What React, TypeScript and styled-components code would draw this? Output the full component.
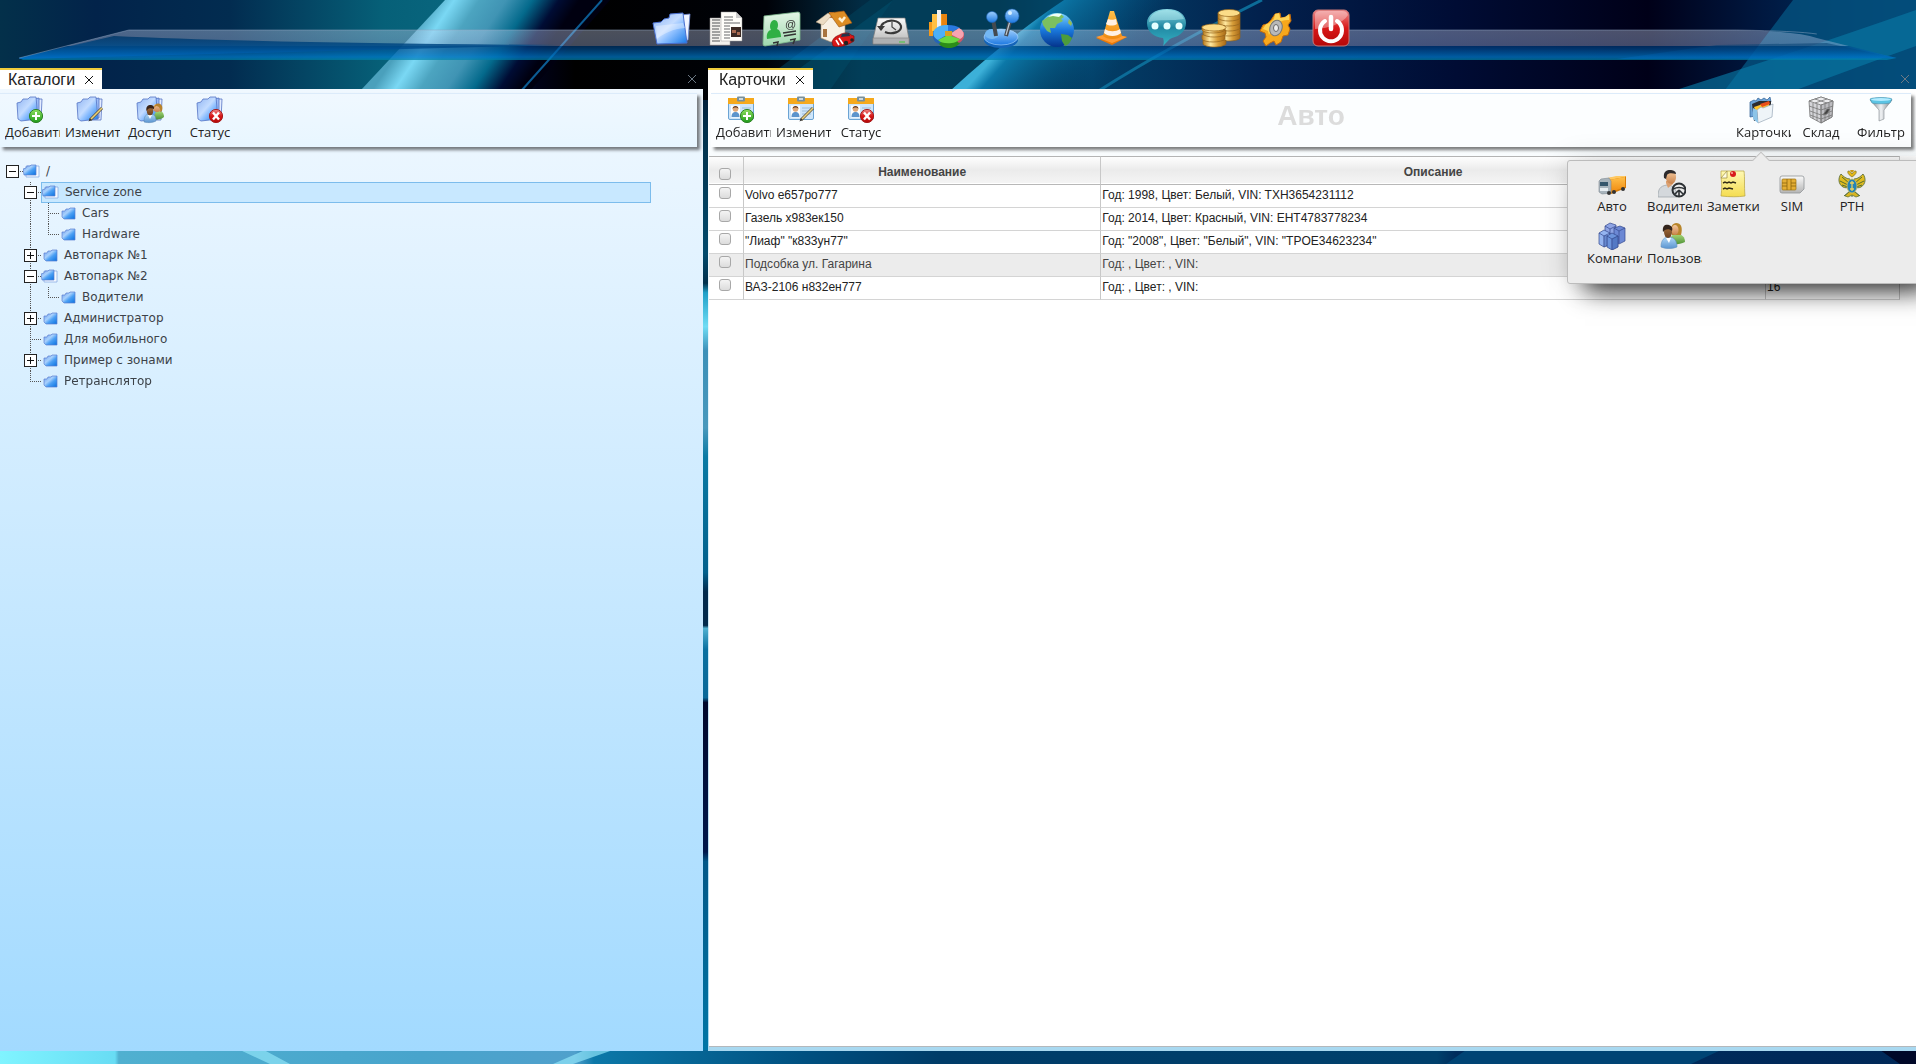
import React, { useState } from 'react';
import styled, { createGlobalStyle, css } from 'styled-components';

const GlobalStyle = createGlobalStyle`
  *, *::before, *::after { box-sizing: border-box; }
  html, body { height: 100%; margin: 0; overflow: hidden; }
  body { font-family: "Liberation Sans", Arial, sans-serif; font-size: 12px; color: #222; background: #000418; }
  #root { height: 100%; }
  button { font: inherit; color: inherit; background: none; border: 0; padding: 0; cursor: pointer; }
`;

/* ---------- drawings ---------- */

const Defs = styled.svg`
  position: absolute;
  width: 0;
  height: 0;
`;

const Grad = ({ id, stops, h }: { id: string; stops: string[]; h?: boolean }) => (
  <linearGradient id={id} x1="0" y1="0" x2={h ? '1' : '0'} y2={h ? '0' : '1'}>
    {stops.map((c, i) => (
      <stop key={i} offset={i / (stops.length - 1)} stopColor={c} />
    ))}
  </linearGradient>
);

const SharedDefs = () => (
  <Defs aria-hidden="true">
    <defs>
      <linearGradient id="folder" x1="0" y1="0" x2="1" y2="1">
        <stop offset="0" stopColor="#8fb4f2" />
        <stop offset=".45" stopColor="#c4dcff" />
        <stop offset=".6" stopColor="#8fc0ff" />
        <stop offset="1" stopColor="#1478e8" />
      </linearGradient>
      <linearGradient id="leaf" x1="0" y1="0" x2="1" y2="1">
        <stop offset="0" stopColor="#6c9cec" />
        <stop offset=".4" stopColor="#a8d0fc" />
        <stop offset=".6" stopColor="#4ca0f4" />
        <stop offset="1" stopColor="#0870e0" />
      </linearGradient>
      <Grad id="gold" stops={['#b87a1c', '#ffe9a0', '#d69c38', '#a86a18']} h />
      <Grad id="orange" stops={['#ffc04a', '#f08a10']} />
      <Grad id="green" stops={['#8fe060', '#1f9a1a']} />
      <Grad id="red" stops={['#f08a8a', '#d81818', '#b40808']} />
      <Grad id="silver" stops={['#fafafa', '#b4b4b4']} />
      <Grad id="teal" stops={['#8fe0ea', '#1f8aa4', '#35b8c8']} />
      <Grad id="blue" stops={['#9fd0ff', '#1c78e0']} />
      <Grad id="card" stops={['#e4f6e6', '#9fd8ae']} />
      <Grad id="steel" stops={['#707880', '#f0f2f4', '#70787f']} h />
      <Grad id="ocean" stops={['#7cd4ff', '#1a78dc', '#04348c']} />
      <Grad id="note" stops={['#fff9b4', '#f4dc50']} />
      <Grad id="skin" stops={['#f4c89c', '#c8824c']} />
      <Grad id="dark" stops={['#a8703c', '#6a4020']} />
      <Grad id="blueShirt" stops={['#b0d8f8', '#5a94d0']} />
      <Grad id="greenShirt" stops={['#a8d878', '#4f9238']} />
    </defs>
  </Defs>
);

const AddMark = () => (
  <g>
    <circle cx="20" cy="20" r="6.6" fill="url(#green)" stroke="#2e8426" />
    <path d="M20 16v8M16 20h8" stroke="#fff" strokeWidth="2" />
  </g>
);
const StopMark = () => (
  <g>
    <circle cx="20" cy="20" r="6.6" fill="url(#red)" stroke="#a81c1c" />
    <path d="M17 16.5l6 7M23 16.5l-6 7" stroke="#fff" strokeWidth="2.4" />
  </g>
);
const PenMark = () => (
  <g>
    <path d="M14 24L26 12" stroke="#5c5440" strokeWidth="3" />
    <path d="M15 23L26 12" stroke="#ecd27a" strokeWidth="1.6" />
    <path d="M12.5 25.5l1.3-3 1.8 1.6z" fill="#333" />
  </g>
);
const UsersMark = () => (
  <g>
    <path d="M18 23c0-6 2-8 5-8s5 2 5 6c-2 2-6 3-10 2z" fill="url(#greenShirt)" />
    <circle cx="21" cy="12" r="4" fill="url(#skin)" />
    <path d="M18 12c0-5 6-6 8-2 1 3 0 6-2 6 1-3-1-6-4-6z" fill="#b8822c" />
    <path d="M8 26c0-6 2-8 6-8s6 2 6 7c-3 2-9 2-12 1z" fill="url(#blueShirt)" stroke="#5a84b0" strokeWidth=".5" />
    <path d="M12 19l2 4 2-4z" fill="#fff" />
    <ellipse cx="14" cy="15" rx="3.2" ry="4.2" fill="url(#dark)" />
    <path d="M10.500 15c-1-5 2-6 4-6s4 1 3.500 4c-2-1-5-1-6 0z" fill="#3a2418" />
  </g>
);
const FolderStack = () => (
  <g stroke="#5674c4" strokeWidth=".8" strokeLinejoin="round">
    <path d="M14 3l8 0 4 0-1 21H14z" fill="#e4ecff" />
    <path d="M18 3l5-1v20h-5z" fill="#9cbcf6" />
    <path d="M1 7l4-1 2-3 5 0 2-2 6 0 2 22-17 2-3-2z" fill="url(#folder)" />
  </g>
);
const Badge = () => (
  <g>
    <rect x="1.5" y="2.5" width="25" height="21" rx="1.5" fill="#cfe6fa" stroke="#6ba4d4" />
    <path d="M1 2h26v6H1z" fill="#f5a91c" />
    <rect x="10" y=".5" width="8" height="5" rx="1" fill="#78909c" />
    <rect x="12" y="2" width="4" height="2" fill="#cfd8dc" />
    <rect x="4" y="9.5" width="9" height="12" fill="#fff" />
    <path d="M4.500 21c0-4 2-5 4-5s4 1 4 5z" fill="#5c94cc" />
    <circle cx="8.5" cy="13" r="2.8" fill="#e0a878" />
    <path d="M5.500 13c0-4 6-4 6 0-1-2-5-2-6 0z" fill="#6a3a18" />
    <path d="M15 12h9M15 15h9M15 18h9" stroke="#90b4d0" strokeWidth=".8" />
  </g>
);

const small: Record<string, React.ReactNode> = {
  folderAdd: <><FolderStack /><AddMark /></>,
  folderEdit: <><FolderStack /><PenMark /></>,
  folderUsers: <><FolderStack /><UsersMark /></>,
  folderStop: <><FolderStack /><StopMark /></>,
  cardAdd: <><Badge /><AddMark /></>,
  cardEdit: <><Badge /><PenMark /></>,
  cardStop: <><Badge /><StopMark /></>,
  cards: (
    <g strokeLinejoin="round">
      <path d="M3 6l4-2 2 1 2-3 3 2 3-2 3 2 3-3 1 5L9 20 3 21z" fill="#6ca4d8" stroke="#2c5c90" strokeWidth=".7" />
      <path d="M5 8l7-3 12 0v13L7 25z" fill="#2c2c30" />
      <path d="M7 11l15-5v5L9 16z" fill="#ffc42c" />
      <path d="M13 8l9-3 1 3-8 3z" fill="#e8501c" />
      <path d="M10 14l4-3 2 1 10-4-1 13-14 6z" fill="#eef4f8" stroke="#98a8b8" strokeWidth=".7" />
      <path d="M6 12l4 2 1 13-5-4z" fill="#8cc4e8" />
    </g>
  ),
  store: (
    <g stroke="#777" strokeWidth=".8">
      <path d="M14 1l12 4-1 16-11 6L3 21 2 5z" fill="#d4d4d8" />
      <path d="M2 5l12 4 12-4-12-4z" fill="#ececee" />
      <path d="M14 9l12-4-1 16-11 6z" fill="#bcbcc0" />
      <path d="M14 9v18M6 7v16M10 8v17M18 8v17M22 7v16M2 10l12 4 12-4M3 15l11 4 11-4M3 19l11 4 11-4M8 3l12 4M20 3L8 7" fill="none" />
      <path d="M16 19l4-6 3 0-3 5z" fill="#444" />
    </g>
  ),
  filter: (
    <g>
      <path d="M3 4h22l-8 10v9l-5 2V14z" fill="url(#steel)" stroke="#858b90" strokeWidth=".6" />
      <path d="M3 3c3-2 19-2 22 0l-2 4c-4 1-14 1-18 0z" fill="#5cc4e4" stroke="#4a94b0" strokeWidth=".6" />
      <ellipse cx="14" cy="3.5" rx="10" ry="1.5" fill="#b4ecff" />
    </g>
  ),
  truck: (
    <g>
      <path d="M10 8l18-2v12l-15 6z" fill="#d87c08" />
      <path d="M10 8l8-2 10 0-1 1-16 3z" fill="#ffc860" />
      <path d="M11 10l16-3v10l-14 5z" fill="url(#orange)" />
      <path d="M1 11l2-2 8-1 2 3v12l-9 1-3-2z" fill="#a8b4bc" stroke="#7c8890" strokeWidth=".6" />
      <path d="M2 12h8v4H2z" fill="#35566c" />
      <path d="M2 18h8v3H2z" fill="#e8eef2" />
      <circle cx="11" cy="23" r="2" fill="#333" /><circle cx="16" cy="22" r="2" fill="#333" /><circle cx="25" cy="19" r="2" fill="#333" />
    </g>
  ),
  driver: (
    <g>
      <path d="M0 27c0-8 2-11 9-12 6 0 10 4 10 12z" fill="#d4d8dc" stroke="#9aa0a6" strokeWidth=".7" />
      <path d="M8 13l2 5 5-4v-3H8z" fill="#dca070" />
      <path d="M7 4c0-3 8-4 10-1 2 3 1 10-3 11-4 0-7-4-7-10z" fill="url(#skin)" />
      <path d="M6 8C5 1 9 0 12 0s6 1 6 4c-4-1-8-1-9 1l-1 4z" fill="#2c2a2c" />
      <circle cx="21" cy="20" r="6.5" fill="none" stroke="#2c3034" strokeWidth="2" />
      <path d="M15 19c4-2 8-2 12 0M21 20v6M21 20l-4 4M21 20l4 4" stroke="#2c3034" strokeWidth="1.6" fill="none" />
    </g>
  ),
  note: (
    <g>
      <path d="M3 1h23c1 7 0 14 1 25-7 1-15 1-24 0 1-8 1-12 0-18z" fill="url(#note)" stroke="#b8a43c" strokeWidth=".7" />
      <path d="M3 8l6 0V1z" fill="#fffce0" stroke="#98883c" strokeWidth=".7" />
      <circle cx="15" cy="4" r="3" fill="#d81c1c" /><circle cx="14" cy="3" r="1" fill="#ffb0a0" />
      <path d="M5 13l2-1 2 1 2-1 2 1 2-1 3 1M5 19l2-1 2 1 2-1 4 1" stroke="#332e18" strokeWidth="1.4" fill="none" />
    </g>
  ),
  sim: (
    <g>
      <path d="M4 6h20a2 2 0 012 2v11l-4 4H4a2 2 0 01-2-2V8a2 2 0 012-2z" fill="url(#silver)" stroke="#909498" strokeWidth=".8" />
      <rect x="4" y="9" width="14" height="11" rx="1" fill="#e4ae34" stroke="#9c7414" strokeWidth=".7" />
      <path d="M9 9v11M13 9v11M4 13h5M4 16h5M13 13h5M13 16h5" stroke="#8c640c" strokeWidth=".8" />
    </g>
  ),
  eagle: (
    <g>
      <path d="M14 7C11 5 9 3 10 1c2 0 3 1 4 3 1-2 2-3 4-3 1 2-1 4-4 6z" fill="#e4b818" stroke="#6e6418" strokeWidth=".6" />
      <path d="M12 9C8 9 5 6 3 4 0 8 0 14 5 17c2 1 4 1 6 0zM16 9c4 0 7-3 9-5 3 4 3 10-2 13-2 1-4 1-6 0z" fill="#e0bc20" stroke="#4c6434" strokeWidth=".8" />
      <path d="M4 7l7 6M2 11l8 4M4 15l6 2M24 7l-7 6M26 11l-8 4M24 15l-6 2M12 21l-6 5M16 21l6 5M14 23v4" stroke="#566c30" strokeWidth="1" />
      <path d="M11 22l-4 4 3 1 4-2 4 2 3-1-4-4z" fill="#d8b420" stroke="#566c30" strokeWidth=".7" />
      <ellipse cx="14" cy="16" rx="5" ry="7" fill="#2484b8" stroke="#d8c060" strokeWidth=".8" />
      <path d="M14 11v10M12 13h4M12 19h4" stroke="#e8d060" strokeWidth="1.3" />
      <path d="M12 0h4l-1 2h-2z" fill="#c89818" />
    </g>
  ),
  company: (
    <g stroke="#34488c" strokeWidth=".7" strokeLinejoin="round">
      <path d="M7 4l5-3 6 2v14l-6 2-5-3z" fill="#8ea4e4" />
      <path d="M16 6l6-2 5 2v13l-6 3-5-3z" fill="#6c88d4" />
      <path d="M1 11l5-3 6 3v11l-6 3-5-3z" fill="#94b4f0" />
      <path d="M9 14l5-3 6 3v11l-6 3-5-3z" fill="#6c94dc" />
      <path d="M1 11l5 3 6-3M6 14v11M9 14l5 3 6-3M14 17v11M16 6l5 3 6-3M21 9v12M7 4l5 3 6-3M12 7v5" fill="none" />
      <path d="M6 14l3-1v11l-3 1zM14 17l6-3v11l-6 3z" fill="#3c60b0" opacity=".5" />
    </g>
  ),
  users: (
    <g>
      <path d="M12 22c0-8 2-10 7-10s8 3 8 8c-4 2-10 3-15 2z" fill="url(#greenShirt)" />
      <path d="M14 13c-2-7-1-11 4-12 5 0 7 4 5 12z" fill="#b8862c" />
      <ellipse cx="17" cy="8" rx="3.5" ry="5" fill="url(#skin)" />
      <path d="M3 25c0-7 3-10 8-10s8 4 8 10c-5 2-11 2-16 0z" fill="url(#blueShirt)" stroke="#6090c0" strokeWidth=".6" />
      <path d="M8 16l3 5 2-5z" fill="#fff" />
      <ellipse cx="10" cy="10" rx="4" ry="6" fill="url(#dark)" />
      <path d="M5 10C4 3 8 2 11 3s4 3 3 6c-2-2-5-2-7-1z" fill="#33241c" />
    </g>
  ),
};

const large: { name: string; art: React.ReactNode }[] = [
  { name: 'Каталоги', art: (
    <g strokeLinejoin="round">
      <path d="M30 6l9-1-2 26-7 1z" fill="#f0f4ff" stroke="#6c88d0" strokeWidth=".8" />
      <path d="M2 14l8-1 3-3 5-1 1-4 13-1 1 8 3 22-30 1z" fill="url(#folder)" stroke="#4a70d0" strokeWidth="1" />
      <path d="M5 17l27-3 2 5C22 20 13 24 6 30z" fill="#fff" opacity=".35" />
    </g>) },
  { name: 'Отчёты', art: (
    <g>
      <path d="M4 9h20v27H4z" fill="#f2f0ec" stroke="#999" strokeWidth=".5" />
      <path d="M6 11h8M6 14h8M6 17h8M6 20h7M6 23h8M6 26h8M6 29h7M6 32h8" stroke="#888" strokeWidth="1.3" />
      <path d="M15 3h15l6 6v23H15z" fill="#fffefa" stroke="#999" strokeWidth=".5" />
      <path d="M30 3l6 6h-6z" fill="#ccc" />
      <path d="M18 8h9M18 11h9M18 14h16M18 17h6M18 20h6M18 23h6M18 26h6M18 29h6" stroke="#9a9a9a" strokeWidth="1.3" />
      <rect x="25" y="18" width="10" height="10" fill="#3c2a24" /><path d="M26 21h4v3h-4zM31 23h3v3h-3z" fill="#a86a50" />
    </g>) },
  { name: 'Контакты', art: (
    <g>
      <path d="M3 7L37 3q2 0 2 2v26L4 37q-2 0-2-2z" fill="url(#card)" stroke="#7cb88c" strokeWidth=".8" />
      <path d="M6 30c-1-6 2-9 4-9-2-3-1-9 3-10 4 0 5 5 3 9 3 1 4 4 4 8z" fill="#30b044" />
      <text x="24" y="19" fontSize="11" fontFamily="Liberation Sans, sans-serif" fill="#333">@</text>
      <path d="M22 24l13-2M23 27l12-2M12 34l5-1-1 4M29 31l5-1-2 5" stroke="#333" strokeWidth="1.5" fill="none" />
    </g>) },
  { name: 'Объекты', art: (
    <g>
      <path d="M5 14l9-7 15 5v20l-14 1-10-4z" fill="#f8f0e4" stroke="#a89070" strokeWidth=".6" />
      <path d="M13 3h5v6h-5z" fill="#c87c3c" />
      <path d="M0 13L12 4l4 2-9 10z" fill="#ecdcc4" stroke="#b09878" strokeWidth=".5" />
      <path d="M13 4l15-2 8 12-13 4z" fill="#dc8c24" stroke="#985414" strokeWidth=".6" />
      <path d="M23 9l3 3 3-4" stroke="#fff0d0" strokeWidth="2.5" fill="none" />
      <path d="M7 20h4v8H7z" fill="#a87440" />
      <path d="M16 33c2-6 6-6 9-8 5-2 9-1 10 1l3 1v5c-6 4-14 7-21 5z" fill="#d81818" stroke="#780808" strokeWidth=".6" />
      <path d="M26 25l7-1 1 3-9 1z" fill="#24344c" />
      <path d="M20 31l3 5M23 29l4 6" stroke="#fff" strokeWidth="1.6" />
      <circle cx="30" cy="34" r="2.2" fill="#222" /><circle cx="36" cy="31" r="1.8" fill="#222" />
    </g>) },
  { name: 'История', art: (
    <g>
      <path d="M7 9h27l4 21v5H2v-5z" fill="url(#silver)" stroke="#777" strokeWidth=".7" />
      <path d="M2 29h36v6H2z" fill="#aeb0b2" stroke="#808080" strokeWidth=".6" />
      <path d="M28 33h6" stroke="#66c060" strokeWidth="1.5" />
      <path d="M13 14c5-4 15-3 17 3 1 6-9 9-16 6M13 14c-2 1-3 3-3 5" stroke="#383838" strokeWidth="2.2" fill="none" />
      <path d="M6 17h8l-4 5z" fill="#383838" /><path d="M21 13v5l4 3" stroke="#444" strokeWidth="1.2" fill="none" />
    </g>) },
  { name: 'Статистика', art: (
    <g>
      <path d="M3 13h4v14H3zM13 5h5v15h-5z" fill="#f49a1c" /><path d="M6 5h5v17H6z" fill="#ffc044" /><path d="M11 1h4v18h-4z" fill="#f0f0f0" /><path d="M16 5h5v14h-5z" fill="#e88410" />
      <path d="M12 28v6c3 4 7 5 11 5s9-2 11-5v-6z" fill="#2c8c18" />
      <path d="M7 24v5c1 3 3 5 6 6l9-10z" fill="#2464b8" /><path d="M38 23v5c-1 3-3 5-5 6l-8-8z" fill="#c85868" />
      <path d="M22 25L12 31c-5-2-6-8-3-11 4-4 9-4 13-4z" fill="#4cb0f8" />
      <path d="M22 24V16c5 0 9 1 12 3z" fill="#2a78e0" />
      <path d="M24 25l9-6c6 3 6 9 1 11z" fill="#f8a4b0" />
      <path d="M22 26l12 4c-3 5-18 6-22 1z" fill="#6cd840" />
      <path d="M19 22h7v5h-7z" fill="#d8a020" />
    </g>) },
  { name: 'Управление', art: (
    <g>
      <ellipse cx="20" cy="31" rx="17" ry="8" fill="#1464b8" /><ellipse cx="20" cy="28" rx="17" ry="8" fill="url(#blue)" stroke="#b0d8ff" strokeWidth=".6" />
      <ellipse cx="11" cy="25" rx="7" ry="5" fill="#74b8f4" />
      <path d="M12 10l3 17M30 9l-5 18" stroke="#444a50" strokeWidth="4" /><path d="M29 12l-4 14" stroke="#c0c8d0" strokeWidth="1.2" />
      <circle cx="11" cy="8" r="5.5" fill="url(#blue)" stroke="#1c64b8" strokeWidth=".6" /><circle cx="31" cy="7" r="7" fill="url(#blue)" stroke="#1c64b8" strokeWidth=".6" />
      <circle cx="29" cy="4" r="2" fill="#d8f0ff" />
    </g>) },
  { name: 'Карта', art: (
    <g>
      <circle cx="21" cy="21" r="17" fill="url(#ocean)" />
      <path d="M12 8c4-3 9-4 13-3l3 3-3 2 2 2-6 3-2 4-5 0 1 5-4-2-4-6-1-4z" fill="#7cc060" />
      <path d="M12 8c4-4 10-4 14-3l-3 3-6-1z" fill="#f0fff4" />
      <path d="M25 25l7 1 4 3c-2 5-4 7-7 8l-3-5z" fill="#4c9c3c" /><path d="M33 10l3 4-1 3-3-3z" fill="#98bc50" />
    </g>) },
  { name: 'Дорожные работы', art: (
    <g>
      <path d="M5 29l14-5 17 4-15 8z" fill="#e87808" /><path d="M5 28l14-4 17 4-15 6z" fill="#ff9c34" />
      <path d="M19 2h4l8 25c-4 4-15 4-19 0z" fill="url(#orange)" />
      <path d="M17 10c2 1 6 1 8 0l1 5c-3 2-8 2-11 0zM14 20c4 3 11 3 15 0l1 4c-4 4-13 4-17 0z" fill="#fff1e4" />
    </g>) },
  { name: 'Сообщения', art: (
    <g>
      <path d="M21 0c12 0 19 6 19 14 0 8-6 13-14 15-3 1-5 4-9 8 1-3 1-5 0-8C8 28 1 23 1 14 1 6 9 0 21 0z" fill="url(#teal)" opacity=".95" />
      <path d="M21 1C9 1 3 7 3 13c10-3 24-1 35-3C36 5 31 1 21 1z" fill="#c0f0f4" opacity=".45" />
      <g fill="#e4ffff"><circle cx="9" cy="17" r="3.5" /><circle cx="21" cy="17" r="3.5" /><circle cx="33" cy="17" r="3.5" /></g>
    </g>) },
  { name: 'Финансы', art: (
    <g stroke="#94641c" strokeWidth=".7">
      {[28, 23, 18, 13, 8].map(y => <path key={y} d={`M17 ${y - 4}v5c2 4 20 4 22 0v-5z`} fill="url(#gold)" />)}
      <ellipse cx="28" cy="4" rx="11" ry="3.5" fill="#fbdc88" />
      {[35, 30, 25, 21].map((y, i) => <path key={y} d={`M${2 - (i % 2)} ${y - 4}v4c2 4 20 4 23 0v-4z`} fill="url(#gold)" />)}
      <ellipse cx="13" cy="18.5" rx="12" ry="3.5" fill="#fbdc88" />
    </g>) },
  { name: 'Настройки', art: (
    <g strokeLinejoin="round">
      <path d="M19 5l5-1 1 5 5-1 4-3 1 7-3 4 2 4-2 6-5 1-2 6-5 3-2-4-4 2-4 3-3-5 3-4-1-4-5-2 3-6 4-1 4-4z" fill="#f8a81c" stroke="#c46c0c" strokeWidth="1" />
      <path d="M19 5l4-1 1 5 5-1 4-3 0 6c-8-1-16 5-20 15l-1-4-5-2 3-5 4-1 4-4z" fill="#ffdc60" opacity=".85" />
      <ellipse cx="20" cy="19" rx="6" ry="8" transform="rotate(20 20 19)" fill="#b8b8b8" stroke="#777" /><ellipse cx="20" cy="19" rx="2.5" ry="3.5" fill="#eee" stroke="#666" />
    </g>) },
  { name: 'Выход', art: (
    <g>
      <rect x="2" y="1" width="36" height="36" rx="5" fill="url(#red)" stroke="#c87878" />
      <path d="M4 5q1-3 5-3h22q5 0 6 4c-6 9-18 13-33 14z" fill="#fff" opacity=".35" />
      <path d="M14 12a11 11 0 1012 0" stroke="#fff" strokeWidth="4" fill="none" strokeLinecap="round" /><path d="M20 8v12" stroke="#fff" strokeWidth="4.5" strokeLinecap="round" />
    </g>) },
];

const Wallpaper = styled.svg`
  position: fixed;
  inset: 0;
  width: 100%;
  height: 100%;
  z-index: -1;
`;

const Backdrop = () => (
  <Wallpaper viewBox="0 0 1916 1064" preserveAspectRatio="none" aria-hidden="true">
    <defs>
      <linearGradient id="wpTop" x1="0" y1="0" x2="1" y2="0">
        <stop offset="0" stopColor="#03304a" /><stop offset=".05" stopColor="#02234a" /><stop offset=".12" stopColor="#022c50" />
        <stop offset=".2" stopColor="#066078" /><stop offset=".25" stopColor="#0a6880" /><stop offset=".28" stopColor="#000218" /><stop offset=".3" stopColor="#000" />
        <stop offset=".4" stopColor="#000208" /><stop offset=".45" stopColor="#022c44" /><stop offset=".52" stopColor="#022840" /><stop offset=".57" stopColor="#034068" />
        <stop offset=".66" stopColor="#02204c" /><stop offset=".76" stopColor="#000c34" /><stop offset=".86" stopColor="#000018" /><stop offset=".92" stopColor="#001840" /><stop offset="1" stopColor="#003c70" />
      </linearGradient>
      <linearGradient id="wpBeam" gradientUnits="userSpaceOnUse" x1="403" y1="44" x2="505" y2="112">
        <stop offset="0" stopColor="#4aa0bc" /><stop offset=".15" stopColor="#7ad8f4" /><stop offset=".32" stopColor="#4ca4c0" /><stop offset=".5" stopColor="#4094b4" />
        <stop offset=".68" stopColor="#046a8c" /><stop offset=".86" stopColor="#000c34" /><stop offset="1" stopColor="#000010" />
      </linearGradient>
      <linearGradient id="wpRay" gradientUnits="userSpaceOnUse" x1="1005" y1="44" x2="1080" y2="110">
        <stop offset="0" stopColor="#3cb0d8" /><stop offset=".12" stopColor="#0c78a8" /><stop offset="1" stopColor="#025080" stopOpacity="0" />
      </linearGradient>
      <linearGradient id="wpGap" x1="0" y1="0" x2="0" y2="1">
        <stop offset="0" stopColor="#02203a" /><stop offset=".03" stopColor="#02304a" /><stop offset=".16" stopColor="#024a6c" /><stop offset=".19" stopColor="#01304c" />
        <stop offset=".2" stopColor="#20a0c8" /><stop offset=".235" stopColor="#70dcf4" /><stop offset=".26" stopColor="#3c90b8" /><stop offset=".34" stopColor="#4898bc" />
        <stop offset=".37" stopColor="#0a7aa4" /><stop offset=".49" stopColor="#02608c" /><stop offset=".51" stopColor="#022a4c" /><stop offset=".545" stopColor="#022a4c" /><stop offset=".548" stopColor="#50b0d0" />
        <stop offset=".57" stopColor="#0a70a0" /><stop offset=".62" stopColor="#0a6898" /><stop offset=".625" stopColor="#00082c" /><stop offset=".78" stopColor="#00184c" />
        <stop offset=".79" stopColor="#025888" /><stop offset="1" stopColor="#0078a8" />
      </linearGradient>
      <linearGradient id="wpFoot" x1="0" y1="0" x2="1" y2="0">
        <stop offset="0" stopColor="#80f4ff" /><stop offset=".06" stopColor="#68dcf4" /><stop offset=".062" stopColor="#50b0d0" /><stop offset=".22" stopColor="#48a4cc" />
        <stop offset=".3" stopColor="#50a0cc" /><stop offset=".31" stopColor="#0c78a8" /><stop offset=".42" stopColor="#005080" /><stop offset=".49" stopColor="#003c68" />
        <stop offset=".75" stopColor="#00406c" /><stop offset=".76" stopColor="#002c5c" /><stop offset="1" stopColor="#002858" />
      </linearGradient>
    </defs>
    <rect width="1916" height="120" fill="url(#wpTop)" />
    <path d="M445 0L361 90h170L610 0z" fill="url(#wpBeam)" />
    <path d="M602 0L522 90" stroke="#0c5c94" strokeWidth="2" />
    <path d="M870 0L750 90h80L893 0z" fill="#024058" opacity=".6" />
    <path d="M893 0L770 90h180L1064 0z" fill="#035474" opacity=".45" />
    <path d="M1064 0Q1010 36 951 90h180L1260 0z" fill="url(#wpRay)" />
    <path d="M1262 0Q1170 46 1100 90" stroke="#0c6c98" strokeWidth="3" fill="none" />
    <path d="M1793 0L1725 90h191V0z" fill="#04507c" opacity=".85" />
    <path d="M1916 10Q1790 54 1676 90h120Q1860 66 1916 46z" fill="#0878a4" opacity=".65" />
    <rect x="690" y="100" width="30" height="964" fill="url(#wpGap)" />
    <rect y="1050" width="1916" height="14" fill="url(#wpFoot)" />
    <path d="M240 1050l30 14h20l-26-14zM585 1050l-32 14h20l40-14z" fill="#90e4f8" opacity=".7" />
    <path d="M1466 1050l-20 14h245l30-14z" fill="#004474" /><path d="M1880 1050l20 14h16v-14z" fill="#000828" />
  </Wallpaper>
);

/* ---------- top dock ---------- */

const Page = styled.div`
  display: flex;
  flex-direction: column;
  height: 100%;
`;
const Dock = styled.header`
  position: relative;
  flex: none;
  height: 68px;
  padding: 9px 0 0 86px;
`;
const Shelf = styled.svg`
  position: absolute;
  left: 1%;
  top: 29px;
  width: 98%;
  height: 31px;
`;
const DockNav = styled.nav`
  position: relative;
  display: flex;
  justify-content: center;
  gap: 15px;
`;
const DockButton = styled.button`
  width: 40px;
  height: 40px;
  svg { display: block; width: 40px; height: 40px; overflow: visible; }
`;

/* ---------- panels ---------- */

const Workspace = styled.main`
  flex: 1;
  min-height: 0;
  display: grid;
  grid-template-columns: minmax(0, 703fr) minmax(0, 1208fr);
  gap: 5px;
  padding-bottom: 13px;
`;
const Panel = styled.section`
  display: flex;
  flex-direction: column;
  min-width: 0;
`;
const TabBar = styled.div`
  display: flex;
  justify-content: space-between;
  align-items: center;
  height: 21px;
  padding-right: 6px;
`;
const Tab = styled.div<{ $inset: number }>`
  display: flex;
  align-items: center;
  gap: 9px;
  height: 21px;
  padding: 0 8px 0 ${p => p.$inset}px;
  border-top: 2px solid #f0cc3c;
  background: #fff;
  font-size: 16px;
  line-height: 19px;
`;
const CloseButton = styled.button<{ $dim?: boolean }>`
  display: flex;
  svg {
    width: 10px;
    height: 10px;
    stroke: ${p => (p.$dim ? '#6c7884' : '#111')};
  }
`;
const Close = ({ label, dim }: { label: string; dim?: boolean }) => (
  <CloseButton type="button" aria-label={label} $dim={dim}>
    <svg viewBox="0 0 10 10" fill="none"><path d="M1 1l8 8M9 1L1 9" /></svg>
  </CloseButton>
);
const PanelBody = styled.div<{ $tone: 'blue' | 'white' }>`
  flex: 1;
  min-height: 0;
  display: flex;
  flex-direction: column;
  background: ${p => (p.$tone === 'blue' ? 'linear-gradient(#f0f8ff, #a2daff)' : 'linear-gradient(#fff, #a8d8f0)')};
  padding: ${p => (p.$tone === 'blue' ? '4px 6px 0 0' : '4px 0 4px')};
`;
const Toolbar = styled.div<{ $tone: 'blue' | 'white' }>`
  display: flex;
  justify-content: space-between;
  align-items: flex-start;
  flex: none;
  height: 54px;
  padding: 2px 0 0 5px;
  background: ${p => (p.$tone === 'blue' ? 'linear-gradient(#f0f8ff, #e8f6ff)' : '#fcfeff')};
  border-top: 1px solid #dcebfa;
  box-shadow: 3px 3px 3px rgba(0, 0, 0, 0.5);
  ${p => p.$tone === 'white' && css`margin: 0 5px 0 3px;`}
`;
const ToolGroup = styled.div`
  display: flex;
  gap: 5px;
`;
const Title = styled.h1`
  margin: 0;
  padding: 4px 5px 0 0;
  font-size: 28px;
  line-height: 32px;
  font-weight: bold;
  color: #dcdcdc;
`;
const Tool = styled.button`
  display: block;
  width: 55px;
  svg { display: block; width: 28px; height: 28px; margin: 0 0 0 11px; }
  span {
    display: block;
    overflow: hidden;
    padding-right: 5px;
    white-space: nowrap;
    font: 13px/16px "Open Sans", "Noto Sans", sans-serif;
    color: #222;
    text-align: center;
  }
`;
const ToolItem = ({ icon, label, onClick }: { icon: string; label: string; onClick?: () => void }) => (
  <Tool type="button" onClick={onClick}>
    <svg viewBox="0 0 28 28" aria-hidden="true">{small[icon]}</svg>
    <span>{label}</span>
  </Tool>
);

/* ---------- catalogue tree ---------- */

const TreeList = styled.ul`
  list-style: none;
  margin: 0;
  padding: 14px 46px 0 5px;
  ul { list-style: none; margin: 0; padding: 0; }
`;
const TreeRow = styled.div`
  display: flex;
  height: 21px;
`;
const lineV = 'repeating-linear-gradient(#555 0 1px, transparent 1px 2px)';
const lineH = 'repeating-linear-gradient(90deg, #555 0 1px, transparent 1px 2px)';
const Guide = styled.span<{ $v: 'full' | 'half' | 'none'; $h: boolean }>`
  flex: none;
  display: flex;
  align-items: center;
  width: 18px;
  padding-left: 1px;
  background-image: ${lineV}, ${lineH};
  background-repeat: no-repeat;
  background-position: 7px 0, 7px 50%;
  background-size:
    1px ${p => ({ full: '100%', half: '50%', none: '0' })[p.$v]},
    ${p => (p.$h ? '11px' : '0')} 1px;
`;
const Expander = styled.button`
  width: 13px;
  height: 13px;
  border: 1px solid #222;
  background: #fff;
  svg { display: block; width: 11px; height: 11px; stroke: #111; }
`;
const Node = styled.a<{ $selected?: boolean }>`
  display: flex;
  align-items: center;
  gap: 3px;
  color: #3c4248;
  text-decoration: none;
  font: 12px/19px "DejaVu Sans", Verdana, sans-serif;
  svg { flex: none; width: 20px; height: 16px; }
  ${p => p.$selected && css`
    flex: 1;
    border: 1px solid #7cbcec;
    background: #c8e8ff;
  `}
`;
type Item = { name: string; open?: boolean; kids?: Item[]; selected?: boolean };
const tree: Item = {
  name: '/', open: true, kids: [
    { name: 'Service zone', open: true, selected: true, kids: [{ name: 'Cars' }, { name: 'Hardware' }] },
    { name: 'Автопарк №1', open: false },
    { name: 'Автопарк №2', open: true, kids: [{ name: 'Водители' }] },
    { name: 'Администратор', open: false },
    { name: 'Для мобильного' },
    { name: 'Пример с зонами', open: false },
    { name: 'Ретранслятор' },
  ],
};
const NodeIcon = ({ open }: { open?: boolean }) => (
  <svg viewBox="0 0 20 16" aria-hidden="true">
    {open ? (
      <g strokeWidth=".7">
        <path d="M3 2h13v11H3z" fill="#f4f9ff" stroke="#80a4e0" />
        <path d="M0 5l3-1 1-2h3l1-1h5v10H1z" fill="url(#leaf)" stroke="#5c80d0" />
      </g>
    ) : (
      <path d="M3 5l3 0 1-2 3 0 1-1 5 0v11H5l-2-2z" fill="url(#leaf)" stroke="#5c80d0" strokeWidth=".7" />
    )}
  </svg>
);
const Branch = ({ item, rails, last }: { item: Item; rails: boolean[]; last: boolean }) => {
  const root = rails.length === 0;
  const box = item.open !== undefined;
  return (
    <li>
      <TreeRow>
        {rails.map((on, i) => <Guide key={i} $v={on ? 'full' : 'none'} $h={false} />)}
        <Guide $v={root ? 'none' : last ? 'half' : 'full'} $h>
          {box && (
            <Expander type="button" aria-label={item.open ? 'Свернуть' : 'Развернуть'}>
              <svg viewBox="0 0 11 11"><path d={item.open ? 'M2 5.5h7' : 'M2 5.5h7M5.5 2v7'} /></svg>
            </Expander>
          )}
        </Guide>
        <Node href="#" $selected={item.selected}><NodeIcon open={item.open} />{item.name}</Node>
      </TreeRow>
      {item.kids && (
        <ul>
          {item.kids.map((k, i) => (
            <Branch key={k.name} item={k} rails={[...rails, !root && !last]} last={i === item.kids!.length - 1} />
          ))}
        </ul>
      )}
    </li>
  );
};

/* ---------- card table ---------- */

const TableArea = styled.div`
  flex: 1;
  min-height: 0;
  margin: 9px 0 0 1px;
  background: #fff;
  border-bottom: 1px solid #b4b8bc;
`;
const HeadStrip = styled.div`
  padding-right: 16px;
  background: linear-gradient(#fff 0, #ebebeb 14px, #f4f4f4 27px, transparent 27px) no-repeat 0 0 / 100% 28px;
`;
const Table = styled.table`
  width: 100%;
  table-layout: fixed;
  border-collapse: separate;
  border-spacing: 0;
  th, td { border-right: 1px solid #c8c8c8; border-bottom: 1px solid #d4d4d4; }
  th {
    height: 29px;
    padding: 3px 0 0;
    border-top: 1px solid #b4b4b4;
    border-bottom-color: #b8b8b8;
    font-size: 12px;
    color: #444;
  }
  td { height: 23px; padding: 0 2px 2px 1px; line-height: 16px; white-space: nowrap; }
`;
const Col = styled.col<{ $w: string }>`
  width: ${p => p.$w};
`;
const Row = styled.tr<{ $active?: boolean }>`
  ${p => p.$active && css`background: #ececec; color: #444;`}
`;
const CheckCell = styled.td`
  vertical-align: top;
`;
const Check = styled.input`
  appearance: none;
  display: block;
  width: 12px;
  height: 12px;
  margin: 2px 0 0 9px;
  border: 1px solid #a8a8a8;
  border-radius: 3px;
  background: linear-gradient(#f4f4f4, #dcdcdc);
  th & { margin: 4px 0 0 10px; }
  &:checked { background: #7cbcec; }
`;

const rows = [
  { name: 'Volvo е657ро777', info: 'Год: 1998, Цвет: Белый, VIN: TXH3654231112', id: '' },
  { name: 'Газель х983ек150', info: 'Год: 2014, Цвет: Красный, VIN: EHT4783778234', id: '' },
  { name: '"Лиаф" "к833ун77"', info: 'Год: "2008", Цвет: "Белый", VIN: "TPOE34623234"', id: '' },
  { name: 'Подсобка ул. Гагарина', info: 'Год: , Цвет: , VIN:', id: '', active: true },
  { name: 'ВАЗ-2106 н832ен777', info: 'Год: , Цвет: , VIN:', id: '16' },
];

/* ---------- card type menu ---------- */

const MenuAnchor = styled.div`
  position: relative;
`;
const Menu = styled.div`
  position: absolute;
  z-index: 2;
  top: 64px;
  left: -169px;
  width: 360px;
  height: 124px;
  padding: 5px 19px;
  display: grid;
  grid-template-columns: repeat(5, 55px);
  grid-auto-rows: 52px;
  column-gap: 5px;
  align-content: start;
  background: #ececec;
  border: 1px solid #bcbcbc;
  border-radius: 3px;
  box-shadow: 10px 14px 24px -8px rgba(0, 0, 0, 0.85), 0 0 30px rgba(0, 0, 0, 0.12);
  &::before {
    content: '';
    position: absolute;
    top: -7px;
    left: 187px;
    width: 12px;
    height: 12px;
    background: #ececec;
    border: solid #c4c4c4;
    border-width: 1px 0 0 1px;
    transform: rotate(45deg);
  }
`;

export default function App() {
  const [menuOpen, setMenuOpen] = useState(true);
  return (
    <Page>
      <GlobalStyle />
      <SharedDefs />
      <Backdrop />
      <Dock>
        <Shelf viewBox="0 0 1880 31" preserveAspectRatio="none" aria-hidden="true">
          <defs>
            <linearGradient id="shelfGlow" x1="0" y1="0" x2="0" y2="1">
              <stop offset="0" stopColor="#c8d4f0" stopOpacity=".38" /><stop offset=".52" stopColor="#a0b0d8" stopOpacity=".42" />
              <stop offset=".54" stopColor="#004488" stopOpacity=".6" /><stop offset=".9" stopColor="#0078c8" stopOpacity=".75" /><stop offset="1" stopColor="#0084a8" stopOpacity=".7" />
            </linearGradient>
            <linearGradient id="shelfDeep" x1="0" y1="0" x2="0" y2="1">
              <stop offset="0" stopColor="#003868" /><stop offset=".5" stopColor="#004c8c" /><stop offset="1" stopColor="#0070c8" />
            </linearGradient>
          </defs>
          <path d="M0 29L110 1H1720Q1780 2 1800 9L1880 29L1870 31H4z" fill="url(#shelfGlow)" />
          <path d="M0 29L95 7Q240 14 540 16L1 30z" fill="url(#shelfDeep)" opacity=".85" />
          <path d="M1700 16L1810 14 1880 29 1600 30z" fill="url(#shelfDeep)" opacity=".5" />
          <path d="M0 29L110 1H1720Q1780 2 1800 5" fill="none" stroke="#90a4c0" opacity=".5" />
        </Shelf>
        <DockNav aria-label="Главное меню">
          {large.map(i => (
            <DockButton key={i.name} type="button" aria-label={i.name}>
              <svg viewBox="0 0 40 40" aria-hidden="true">{i.art}</svg>
            </DockButton>
          ))}
        </DockNav>
      </Dock>
      <Workspace>
        <Panel>
          <TabBar>
            <Tab $inset={8}>Каталоги<Close label="Закрыть вкладку" /></Tab>
            <Close label="Закрыть панель" dim />
          </TabBar>
          <PanelBody $tone="blue">
            <Toolbar $tone="blue">
              <ToolGroup>
                <ToolItem icon="folderAdd" label="Добавить" />
                <ToolItem icon="folderEdit" label="Изменить" />
                <ToolItem icon="folderUsers" label="Доступ" />
                <ToolItem icon="folderStop" label="Статус" />
              </ToolGroup>
            </Toolbar>
            <TreeList><Branch item={tree} rails={[]} last /></TreeList>
          </PanelBody>
        </Panel>
        <Panel>
          <TabBar>
            <Tab $inset={11}>Карточки<Close label="Закрыть вкладку" /></Tab>
            <Close label="Закрыть панель" dim />
          </TabBar>
          <PanelBody $tone="white">
            <Toolbar $tone="white">
              <ToolGroup>
                <ToolItem icon="cardAdd" label="Добавить" />
                <ToolItem icon="cardEdit" label="Изменить" />
                <ToolItem icon="cardStop" label="Статус" />
              </ToolGroup>
              <Title>Авто</Title>
              <ToolGroup>
                <MenuAnchor>
                  <ToolItem icon="cards" label="Карточки" onClick={() => setMenuOpen(!menuOpen)} />
                  {menuOpen && (
                    <Menu>
                      <ToolItem icon="truck" label="Авто" />
                      <ToolItem icon="driver" label="Водители" />
                      <ToolItem icon="note" label="Заметки" />
                      <ToolItem icon="sim" label="SIM" />
                      <ToolItem icon="eagle" label="РТН" />
                      <ToolItem icon="company" label="Компании" />
                      <ToolItem icon="users" label="Пользователи" />
                    </Menu>
                  )}
                </MenuAnchor>
                <ToolItem icon="store" label="Склад" />
                <ToolItem icon="filter" label="Фильтр" />
              </ToolGroup>
            </Toolbar>
            <TableArea>
              <HeadStrip>
                <Table>
                  <colgroup><Col $w="35px" /><Col $w="30%" /><Col $w="auto" /><Col $w="134px" /></colgroup>
                  <thead>
                    <tr><th><Check type="checkbox" aria-label="Выбрать все" /></th><th>Наименование</th><th>Описание</th><th /></tr>
                  </thead>
                  <tbody>
                    {rows.map(r => (
                      <Row key={r.name} $active={r.active}>
                        <CheckCell><Check type="checkbox" aria-label={r.name} /></CheckCell>
                        <td>{r.name}</td><td>{r.info}</td><td>{r.id}</td>
                      </Row>
                    ))}
                  </tbody>
                </Table>
              </HeadStrip>
            </TableArea>
          </PanelBody>
        </Panel>
      </Workspace>
    </Page>
  );
}
